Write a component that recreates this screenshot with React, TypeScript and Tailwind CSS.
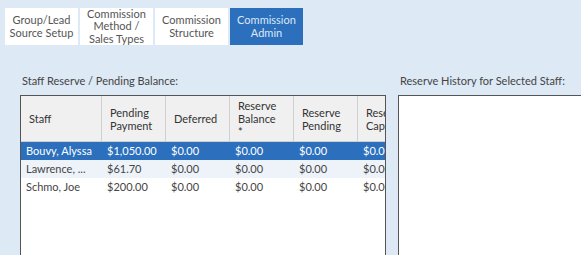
import React from "react";

const font = { fontFamily: '"Lato", "Open Sans", "Liberation Sans", sans-serif' };

function Tab({ lines, active }: { lines: string[]; active?: boolean }) {
  return (
    <div
      className={
        "w-[73px] h-[37px] flex flex-col items-center justify-center text-[11px] leading-[12.5px] text-center " +
        (active ? "bg-[#2b6fbd] text-[#dbe8f6]" : "bg-white text-[#555555]")
      }
    >
      {lines.map((l, i) => (
        <div key={i}>{l}</div>
      ))}
    </div>
  );
}

const cols = [
  { w: "w-[81px]", head: ["Staff"] },
  { w: "w-[64px]", head: ["Pending", "Payment"] },
  { w: "w-[64px]", head: ["Deferred"] },
  { w: "w-[64px]", head: ["Reserve", "Balance", "*"] },
  { w: "w-[64px]", head: ["Reserve", "Pending"] },
  { w: "w-[64px]", head: ["Reserve", "Cap"] },
];

const rows = [
  ["Bouvy, Alyssa", "$1,050.00", "$0.00", "$0.00", "$0.00", "$0.00"],
  ["Lawrence, ...", "$61.70", "$0.00", "$0.00", "$0.00", "$0.00"],
  ["Schmo, Joe", "$200.00", "$0.00", "$0.00", "$0.00", "$0.00"],
];

export default function App() {
  return (
    <div className="w-[581px] h-[255px] bg-[#dde9f5] overflow-hidden" style={font}>
      <div className="flex gap-[2px] pl-[5px] pt-[8px]">
        <Tab lines={["Group/Lead", "Source Setup"]} />
        <Tab lines={["Commission", "Method /", "Sales Types"]} />
        <Tab lines={["Commission", "Structure"]} />
        <Tab lines={["Commission", "Admin"]} active />
      </div>
      <div className="flex mt-[29px]">
        <div className="ml-[20px] w-[366px] flex flex-col">
          <div className="text-[11px] leading-[13px] text-[#444444] pl-[2px]">Staff Reserve / Pending Balance:</div>
          <div className="mt-[8px] h-[170px] border border-[#555555] bg-white overflow-hidden">
            <div className="flex h-[46px] bg-[#f0f0f0] border-b border-[#cfcfcf] whitespace-nowrap">
              {cols.map((c, i) => (
                <div
                  key={i}
                  className={
                    c.w +
                    " shrink-0 flex flex-col justify-center pl-[8px] text-[11px] leading-[13px] text-[#333333] " +
                    (i < cols.length - 1 ? "border-r border-[#d0d0d0]" : "")
                  }
                >
                  {c.head.map((h, j) => (
                    <div key={j}>{h}</div>
                  ))}
                </div>
              ))}
            </div>
            {rows.map((r, ri) => (
              <div
                key={ri}
                className={
                  "flex h-[18px] items-center whitespace-nowrap text-[11px] " +
                  (ri === 0 ? "bg-[#2b6fbd] text-white" : ri === 1 ? "bg-[#edf3f9] text-[#444444]" : "bg-white text-[#444444]")
                }
              >
                {r.map((v, ci) => (
                  <div key={ci} className={cols[ci].w + " shrink-0 pl-[5px] overflow-hidden"}>
                    {v}
                  </div>
                ))}
              </div>
            ))}
          </div>
        </div>
        <div className="ml-[12px] flex-1 flex flex-col">
          <div className="text-[11px] leading-[13px] text-[#444444] pl-[2px]">Reserve History for Selected Staff:</div>
          <div className="mt-[8px] h-[170px] w-[200px] border border-[#555555] bg-white" />
        </div>
      </div>
    </div>
  );
}
